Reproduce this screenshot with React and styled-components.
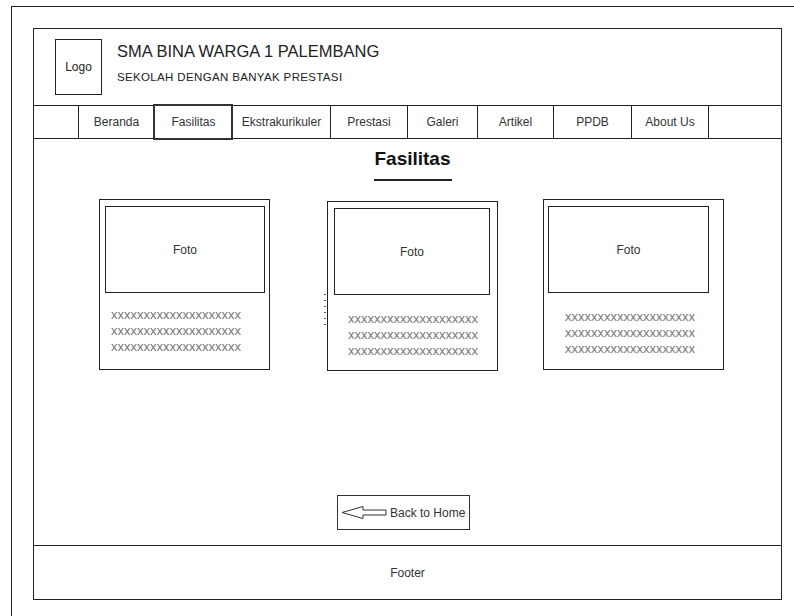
import React from 'react';
import styled, { createGlobalStyle } from 'styled-components';

const GlobalStyle = createGlobalStyle`
  body {
    margin: 0;
    background: #fff;
    overflow: hidden;
    font-family: "Liberation Sans", Arial, sans-serif;
    color: #333;
  }
`;

const Frame = styled.div`
  box-sizing: border-box;
  margin: 6px 0 0 11px;
  height: 610px;
  border-top: 1px solid #222;
  border-left: 1px solid #222;
  padding: 21px 0 0 21px;
`;

const Page = styled.div`
  box-sizing: border-box;
  width: 749px;
  height: 572px;
  border: 1px solid #222;
  display: flex;
  flex-direction: column;
`;

const Header = styled.div`
  height: 76px;
  border-bottom: 1px solid #222;
  display: flex;
  align-items: flex-start;
`;

const Logo = styled.div`
  box-sizing: border-box;
  width: 47px;
  height: 56px;
  margin: 10px 0 0 21px;
  border: 1px solid #222;
  display: flex;
  align-items: center;
  justify-content: center;
  font-size: 12px;
  color: #222;
`;

const Brand = styled.div`
  margin: 13px 0 0 15px;
  display: flex;
  flex-direction: column;
`;

const School = styled.div`
  font-size: 16.5px;
  line-height: 18px;
  color: #222;
`;

const Tagline = styled.div`
  margin-top: 11px;
  font-size: 11.5px;
  line-height: 13px;
  letter-spacing: 0.35px;
  color: #222;
`;

const Nav = styled.div`
  height: 32px;
  border-bottom: 1px solid #222;
  display: flex;
`;

const NavItem = styled.div`
  position: relative;
  box-sizing: border-box;
  width: ${p => p.$w}px;
  flex: ${p => (p.$grow ? 1 : 'none')};
  border-right: ${p => (p.$grow ? 'none' : '1px solid #222')};
  display: flex;
  align-items: center;
  justify-content: center;
  font-size: 12px;
  color: #333;

  ${p => p.$active && `
    &::after {
      content: '';
      position: absolute;
      left: -2px;
      top: -2px;
      right: -1px;
      bottom: -2px;
      border: 2px solid #333;
    }
  `}
`;

const Main = styled.div`
  flex: 1;
  display: flex;
  flex-direction: column;
`;

const TitleBlock = styled.div`
  margin: 9px 0 0 10px;
  display: flex;
  flex-direction: column;
  align-items: center;
`;

const Title = styled.h1`
  margin: 0;
  font-size: 19px;
  line-height: 22px;
  font-weight: bold;
  color: #111;
`;

const Underline = styled.div`
  width: 78px;
  height: 2px;
  margin-top: 9px;
  background: #222;
`;

const CardRow = styled.div`
  display: flex;
  align-items: flex-start;
  margin-top: 18px;
`;

const Card = styled.div`
  position: relative;
  box-sizing: border-box;
  width: ${p => p.$w}px;
  height: ${p => p.$h}px;
  margin-left: ${p => p.$ml}px;
  margin-top: ${p => p.$mt}px;
  border: 1px solid #222;
  display: flex;
  flex-direction: column;

  ${p => p.$ticks && `
    &::before {
      content: '';
      position: absolute;
      left: -4px;
      top: 92px;
      width: 2px;
      height: 36px;
      background: repeating-linear-gradient(#555 0 1px, transparent 1px 6px);
    }
  `}
`;

const Photo = styled.div`
  box-sizing: border-box;
  width: ${p => p.$w}px;
  height: 87px;
  margin: 6px 0 0 ${p => p.$pl}px;
  border: 1px solid #222;
  display: flex;
  align-items: center;
  justify-content: center;
  font-size: 12px;
  color: #333;
`;

const Blurb = styled.div`
  margin: ${p => p.$mt}px 0 0 ${p => p.$pl}px;
  font-size: 13px;
  line-height: 16px;
  color: #777;
  white-space: nowrap;
`;

const BackButton = styled.div`
  box-sizing: border-box;
  align-self: flex-start;
  margin: auto 0 15px 303px;
  width: 133px;
  height: 35px;
  border: 1px solid #333;
  display: flex;
  align-items: center;
  padding-left: 3px;
  gap: 2px;
  font-size: 12px;
  color: #333;
`;

const Footer = styled.div`
  box-sizing: border-box;
  height: 54px;
  border-top: 1px solid #222;
  display: flex;
  align-items: center;
  justify-content: center;
  font-size: 12px;
  color: #333;
`;

const navItems = [
  { label: '', w: 45 },
  { label: 'Beranda', w: 76 },
  { label: 'Fasilitas', w: 78, active: true },
  { label: 'Ekstrakurikuler', w: 98 },
  { label: 'Prestasi', w: 77 },
  { label: 'Galeri', w: 70 },
  { label: 'Artikel', w: 76 },
  { label: 'PPDB', w: 78 },
  { label: 'About Us', w: 77 },
  { label: '', grow: true },
];

const cards = [
  { ml: 65, mt: 0, w: 171, h: 171, photoW: 160, photoPl: 5, textPl: 11, textMt: 14 },
  { ml: 57, mt: 2, w: 171, h: 170, photoW: 156, photoPl: 6, textPl: 20, textMt: 16, ticks: true },
  { ml: 45, mt: 0, w: 181, h: 171, photoW: 161, photoPl: 4, textPl: 21, textMt: 16 },
];

const line = 'x'.repeat(20);

const ArrowLeft = () => (
  <svg width="47" height="16" viewBox="0 0 47 16">
    <path
      d="M1 7.5 L22 1.5 L22 5 L45 5 L45 10 L22 10 L22 13.5 Z"
      fill="#fff"
      stroke="#333"
      strokeWidth="1"
      strokeLinejoin="miter"
    />
  </svg>
);

export default function App() {
  return (
    <>
      <GlobalStyle />
      <Frame>
        <Page>
          <Header>
            <Logo>Logo</Logo>
            <Brand>
              <School>SMA BINA WARGA 1 PALEMBANG</School>
              <Tagline>SEKOLAH DENGAN BANYAK PRESTASI</Tagline>
            </Brand>
          </Header>
          <Nav>
            {navItems.map((item, i) => (
              <NavItem key={i} $w={item.w} $grow={item.grow} $active={item.active}>
                {item.label}
              </NavItem>
            ))}
          </Nav>
          <Main>
            <TitleBlock>
              <Title>Fasilitas</Title>
              <Underline />
            </TitleBlock>
            <CardRow>
              {cards.map((c, i) => (
                <Card key={i} $w={c.w} $h={c.h} $ml={c.ml} $mt={c.mt} $ticks={c.ticks}>
                  <Photo $w={c.photoW} $pl={c.photoPl}>Foto</Photo>
                  <Blurb $mt={c.textMt} $pl={c.textPl}>
                    {line}<br />{line}<br />{line}
                  </Blurb>
                </Card>
              ))}
            </CardRow>
            <BackButton>
              <ArrowLeft />
              Back to Home
            </BackButton>
          </Main>
          <Footer>Footer</Footer>
        </Page>
      </Frame>
    </>
  );
}
